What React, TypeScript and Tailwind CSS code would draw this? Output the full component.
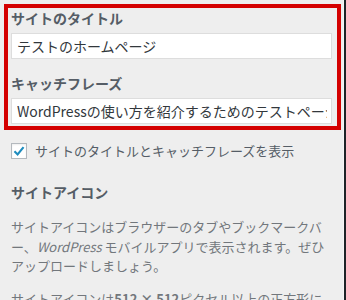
import React from "react";

const FONT = "font-['Noto_Sans_CJK_JP','Noto_Sans',sans-serif]";

function Field({ label, value, top }: { label: string; value: string; top?: boolean }) {
  return (
    <div className={top ? "" : "mt-[14px]"}>
      <div className="h-[20px] text-[14px] leading-[20px] font-bold text-[#555d66]">{label}</div>
      <input
        readOnly
        value={value}
        className="mt-[5px] block h-[26px] w-[321px] border border-[#dddddd] bg-white pl-[5px] pr-[4px] text-[14px] text-[#32373c] outline-none"
      />
    </div>
  );
}

export default function App() {
  return (
    <div className={`flex h-[300px] w-[346px] overflow-hidden ${FONT}`}>
      <div className="flex-1 border-r border-[#f6f6f6] bg-[#eeeeee]">
        <div className="m-[4px] mr-[2px] border-4 border-[#d40000] pl-[3px] pb-[2px]">
          <Field top label="サイトのタイトル" value="テストのホームページ" />
          <Field label="キャッチフレーズ" value="WordPressの使い方を紹介するためのテストページです" />
        </div>

        <div className="pl-[11px] pr-[12px]">
          <label className="mt-[13px] flex h-[16px] items-center gap-[8px]">
            <span className="flex h-[16px] w-[16px] items-center justify-center border border-[#b4b9be] bg-white shadow-[inset_0_1px_2px_rgba(0,0,0,0.07)]">
              <svg width="14" height="14" viewBox="0 0 20 20">
                <path d="M3.5 10.5 L8 15 L16.5 4.5" fill="none" stroke="#1e8cbe" strokeWidth="3" />
              </svg>
            </span>
            <span className="text-[13px] leading-[20px] text-[#555d66]">サイトのタイトルとキャッチフレーズを表示</span>
          </label>

          <div className="mt-[23px] text-[14px] leading-[20px] font-bold text-[#555d66]">サイトアイコン</div>

          <p className="mt-[15px] w-[320px] text-[13px] leading-[19.5px] text-[#72777c] [line-break:loose]">
            サイトアイコンはブラウザーのタブやブックマークバー、<i>WordPress</i> モバイルアプリで表示されます。ぜひアップロードしましょう。
          </p>

          <p className="mt-[13px] w-[320px] text-[13px] leading-[19.5px] text-[#72777c] [line-break:loose]">
            サイトアイコンは<b>512 × 512</b>ピクセル以上の正方形にしてください。
          </p>
        </div>
      </div>
      <div className="w-[2px] bg-[#1d2327]" />
    </div>
  );
}
